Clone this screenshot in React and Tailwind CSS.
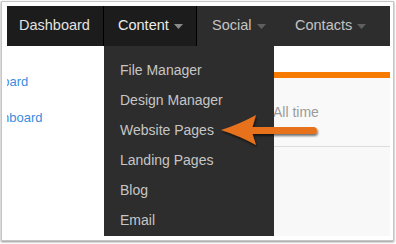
import React from 'react'

const Caret = ({ color = '#7c7c7c' }) => (
    <svg width="9" height="5" viewBox="0 0 9 5" className="ml-[5px] mt-[1px]">
        <path d="M0 0 L9 0 L4.5 5 Z" fill={color} />
    </svg>
)

const menu = ['File Manager', 'Design Manager', 'Website Pages', 'Landing Pages', 'Blog', 'Email']

const App = () => {
    return (
        <div className="relative w-[396px] h-[244px] bg-white" style={{ fontFamily: '"Liberation Sans", Arial, sans-serif' }}>
            <div className="absolute left-[1px] top-[1px] w-[393px] h-[240px] border border-[#c6c6c6] shadow-[0_1px_2px_rgba(0,0,0,0.45)] bg-white pl-[5px] pt-[4px] pr-[2px]">
                <div className="relative w-[383px] h-[233px] overflow-hidden">
                    {/* nav */}
                    <div className="flex h-[40px] bg-[#2d2d2d] text-[14.5px]">
                        <div className="w-[97px] bg-[#1c1c1c] border-r border-black flex items-center pl-[12px] text-[#e2e2e2]">Dashboard</div>
                        <div className="w-[93px] bg-[#1c1c1c] border-r border-black flex items-center pl-[14px] text-[#ebebeb]">
                            Content<Caret color="#8a8a8a" />
                        </div>
                        <div className="w-[83px] flex items-center pl-[15px] text-[#c4c4c4]">
                            Social<Caret color="#5f5f5f" />
                        </div>
                        <div className="flex items-center pl-[15px] text-[#c4c4c4]">
                            Contacts<Caret color="#5f5f5f" />
                        </div>
                    </div>

                    {/* body */}
                    <div className="flex h-[193px]">
                        <div className="w-[97px] bg-white overflow-hidden text-[13px] leading-[16px] text-[#3b8de0]">
                            <div className="mt-[28px] -ml-[12px] whitespace-nowrap">board</div>
                            <div className="mt-[20px] -ml-[5px] whitespace-nowrap">hboard</div>
                        </div>
                        <div className="flex-1 flex flex-col">
                            <div className="h-[26px] bg-white" />
                            <div className="h-[6px] bg-[#f77b00]" />
                            <div className="h-[69px] bg-[#f9f9f9] border-b border-[#dcdcdc] flex items-center pl-[169px] text-[14px] text-[#9b9b9b]">
                                All time
                            </div>
                            <div className="h-[89px] bg-[#f8f8f8]" />
                        </div>
                    </div>

                    {/* dropdown */}
                    <div className="absolute left-[97px] top-[40px] w-[170px] h-[190px] bg-[#2d2d2d] pt-[9px]">
                        {menu.map((m) => (
                            <div key={m} className="h-[30px] flex items-center pl-[16px] text-[14px] text-[#c6c6c6]">{m}</div>
                        ))}
                    </div>
                </div>
            </div>

            {/* annotation arrow */}
            <svg className="absolute left-0 top-0 pointer-events-none" width="396" height="244" viewBox="0 0 396 244">
                <defs>
                    <filter id="sh" x="-20%" y="-20%" width="140%" height="160%">
                        <feDropShadow dx="1" dy="2" stdDeviation="1.3" floodColor="#000" floodOpacity="0.55" />
                    </filter>
                </defs>
                <path
                    d="M221 130 Q240 124 256 115 L252.5 127 L313.5 127 A3.5 3.5 0 0 1 313.5 134 L252.5 134 L256 145 Q240 136 221 130 Z"
                    fill="#e8721c"
                    filter="url(#sh)"
                />
            </svg>
        </div>
    )
}

export default App
